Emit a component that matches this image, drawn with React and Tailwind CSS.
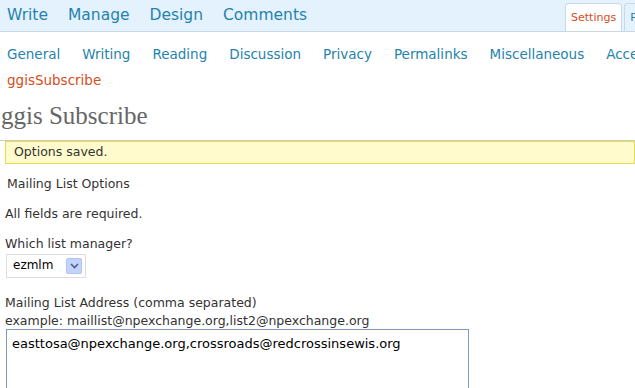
import React from "react";

const topMenu = ["Write", "Manage", "Design", "Comments"];
const subMenu = [
  "General",
  "Writing",
  "Reading",
  "Discussion",
  "Privacy",
  "Permalinks",
  "Miscellaneous",
  "Accessibility",
];

const sans = { fontFamily: '"DejaVu Sans", Verdana, sans-serif' };

export default function App() {
  return (
    <div className="w-[635px] h-[388px] overflow-hidden bg-white text-[#333]" style={sans}>
      {/* top admin menu */}
      <div className="h-[32px] bg-[#e4f2fd] border-b border-[#c6d9e9] flex items-end whitespace-nowrap overflow-hidden">
        <div className="flex-none w-[565px] flex gap-[20px] pl-[7px] h-full items-center text-[15.5px] text-[#2583ad]">
          {topMenu.map((m) => (
            <span key={m}>{m}</span>
          ))}
        </div>
        <div className="flex-none flex gap-[2px] -mb-px">
          <div className="h-[29px] px-[5px] bg-white border border-b-0 border-[#c6d9e9] rounded-t-[4px] flex items-center text-[11px] text-[#d54e21]">
            Settings
          </div>
          <div className="h-[29px] px-[5px] bg-[#e4f2fd] border border-b-0 border-[#c6d9e9] rounded-t-[4px] flex items-center text-[11px] text-[#2583ad]">
            Plugins
          </div>
        </div>
      </div>

      {/* settings submenu */}
      <div className="flex gap-[22px] pl-[7px] pt-[12px] text-[13.5px] text-[#2583ad] whitespace-nowrap">
        {subMenu.map((m) => (
          <span key={m}>{m}</span>
        ))}
      </div>
      <div className="pl-[7px] pt-[6px] text-[13.5px] text-[#d54e21]">ggisSubscribe</div>

      {/* page */}
      <h2
        className="mt-[10px] pl-[1px] pb-[9px] text-[25px] leading-[30px] text-[#666] border-b border-[#cccccc]"
        style={{ fontFamily: '"Liberation Serif", Georgia, serif' }}
      >
        ggis Subscribe
      </h2>
      <div className="ml-[5px] h-[23px] bg-[#fffbcc] border border-[#e6db55] flex items-center pl-[8px] text-[12.5px] text-[#333]">
        Options saved.
      </div>

      <div className="pl-[7px] pt-[11px] text-[12.5px] leading-[17px]">Mailing List Options</div>

      <div className="pl-[5px] text-[12.5px] leading-[17px]">
        <p className="mt-[13px]">All fields are required.</p>
        <p className="mt-[13px]">Which list manager?</p>
        <div className="mt-[2px] ml-[1px] w-[80px] h-[24px] border border-[#dddddd] flex items-center justify-between pl-[6px] pr-[3px]">
          <span className="text-[12px] text-black">ezmlm</span>
          <span className="w-[16px] h-[16px] bg-[#c3d3fd] border border-[#b0c4f0] rounded-[2px] flex items-center justify-center">
            <svg width="9" height="6" viewBox="0 0 9 6">
              <path d="M1 1 L4.5 4.5 L8 1" fill="none" stroke="#4d6185" strokeWidth="1.6" />
            </svg>
          </span>
        </div>
        <p className="mt-[16px]">Mailing List Address (comma separated)</p>
        <p className="mt-[2px] leading-[15px]">example: maillist@npexchange.org,list2@npexchange.org</p>
        <div className="mt-[1px] ml-[1px] w-[463px] h-[80px] border border-[#7f9db9] px-[5px] pt-[5px] text-[13px] text-black">
          easttosa@npexchange.org,crossroads@redcrossinsewis.org
        </div>
      </div>
    </div>
  );
}
